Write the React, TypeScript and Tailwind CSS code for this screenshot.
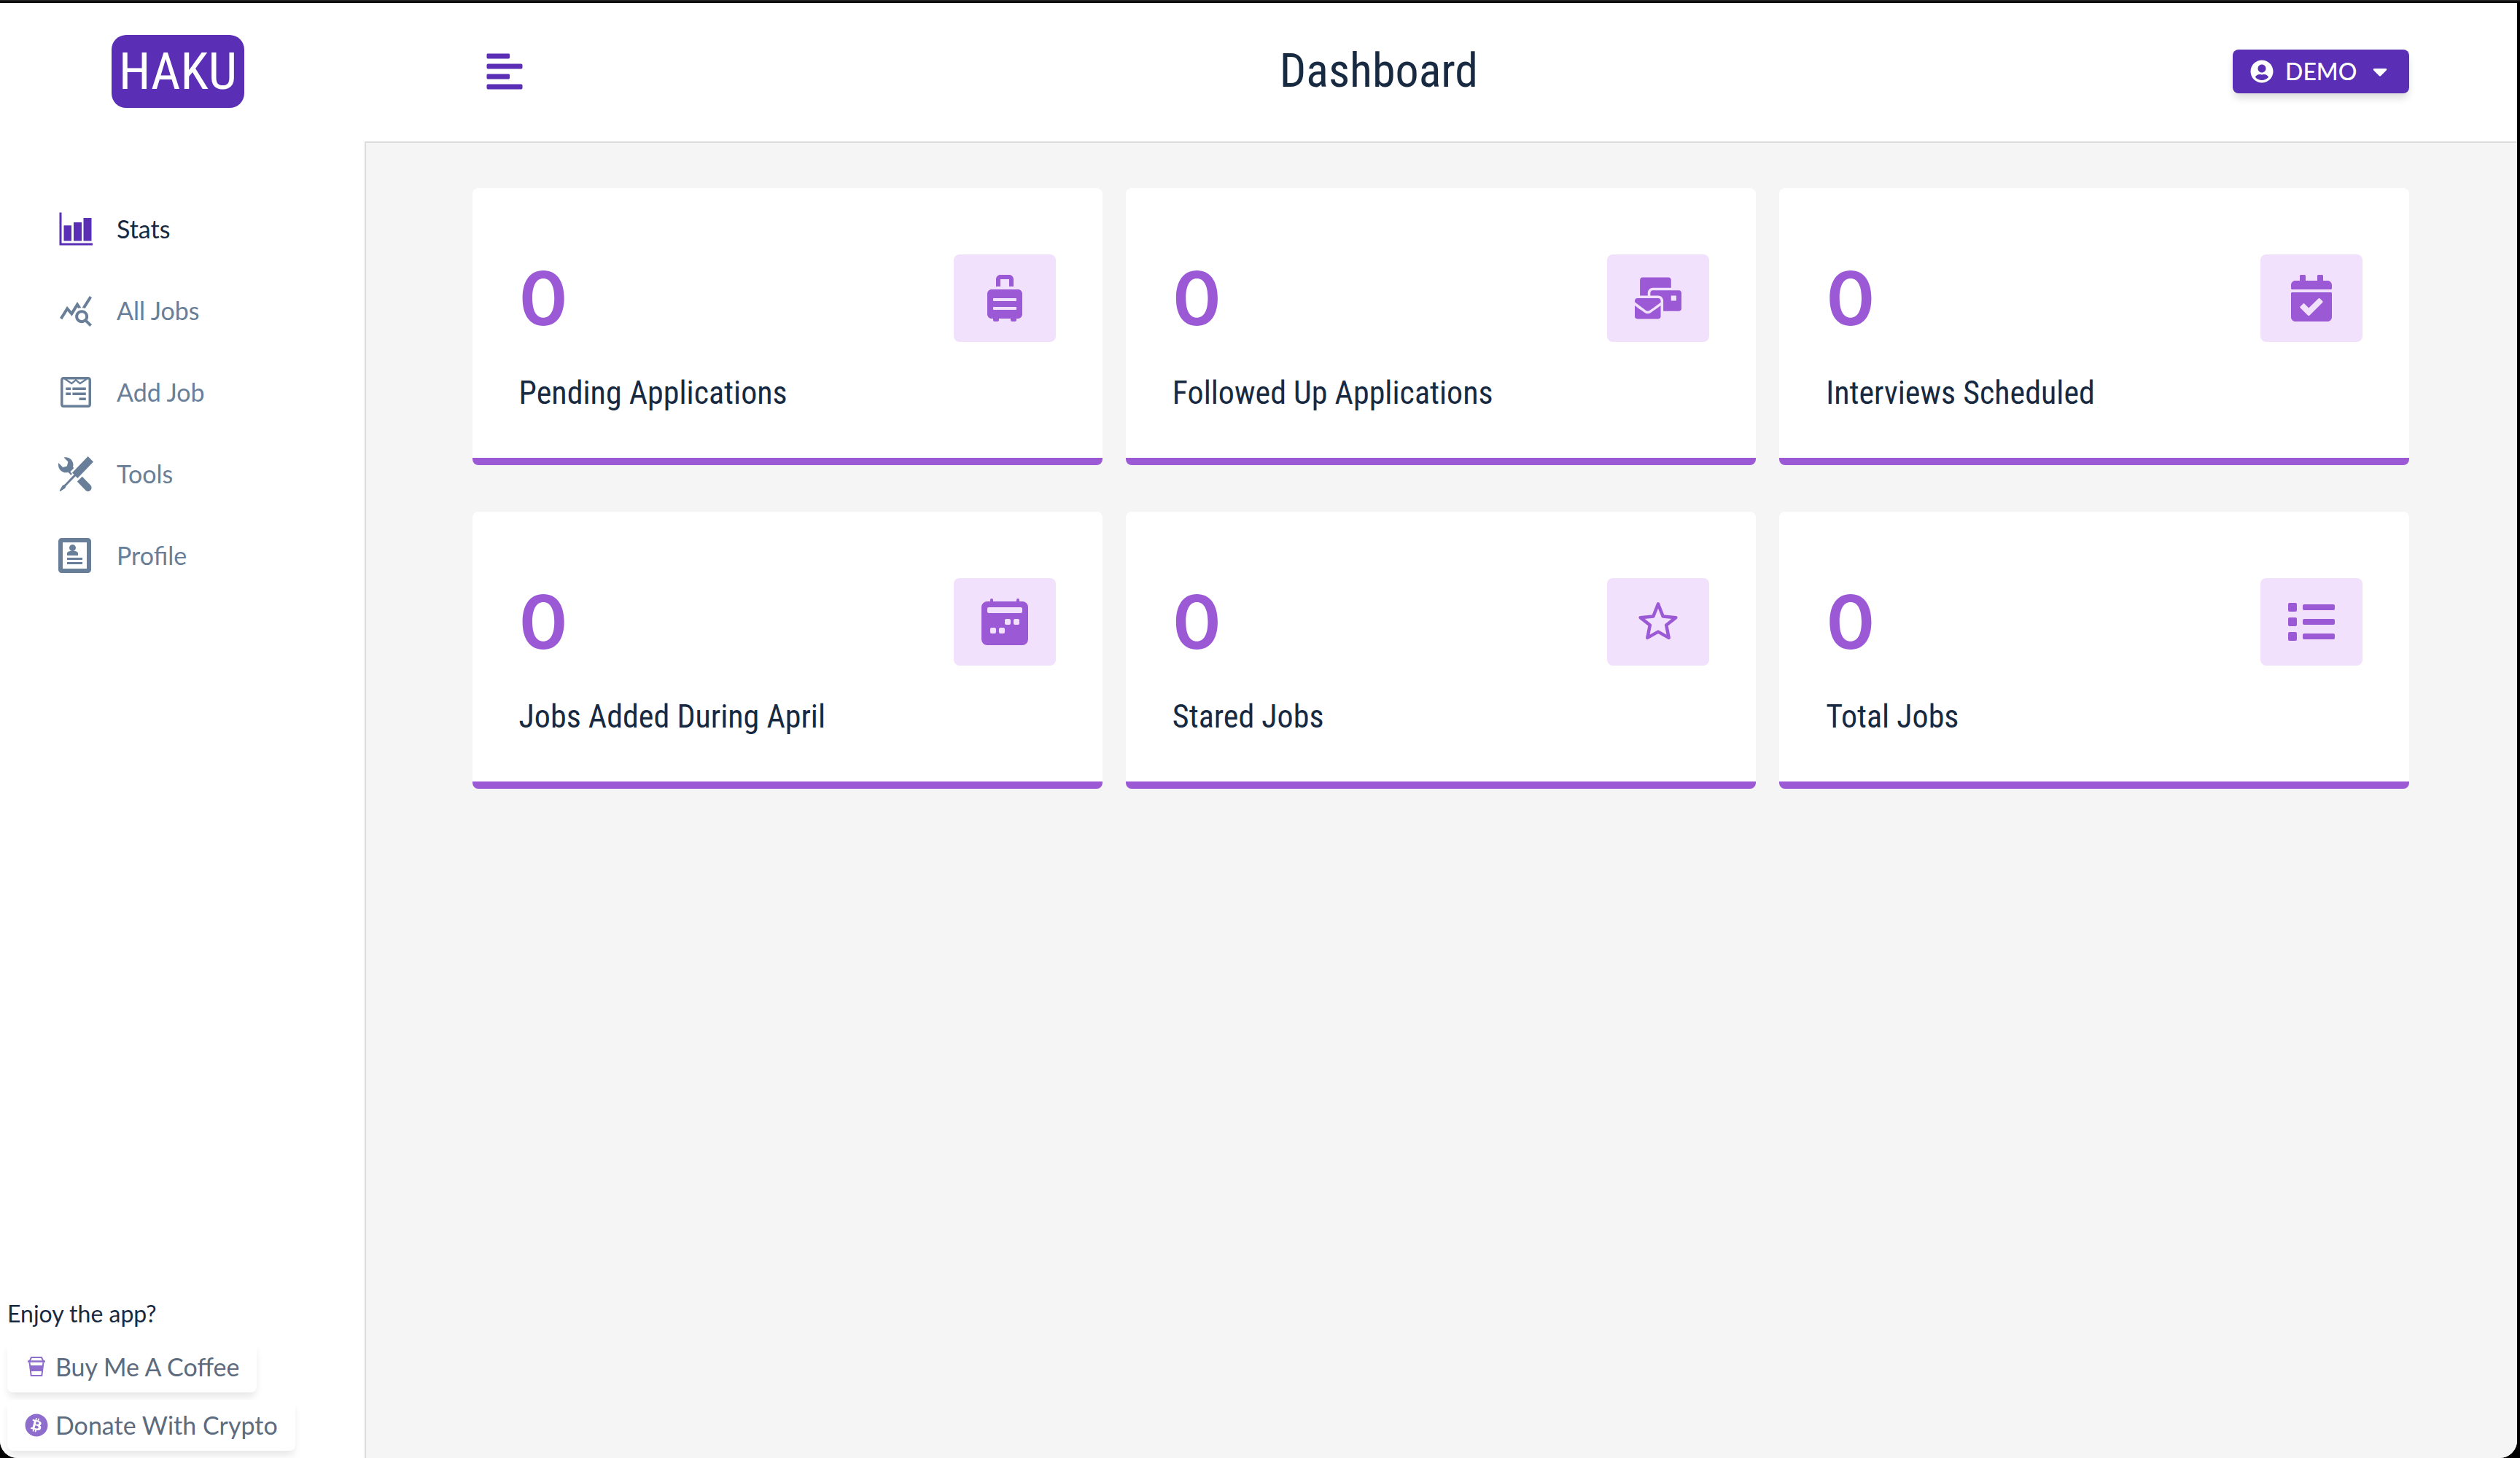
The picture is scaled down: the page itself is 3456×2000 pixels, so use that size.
import type { ReactNode } from "react";
import {
  FaAlignLeft,
  FaBitcoin,
  FaCalendarCheck,
  FaCaretDown,
  FaList,
  FaMailBulk,
  FaSuitcaseRolling,
  FaUserCircle,
  FaWpforms,
} from "react-icons/fa";
import { BsCalendar2WeekFill } from "react-icons/bs";
import { ImProfile } from "react-icons/im";
import { MdQueryStats } from "react-icons/md";

function BarChartIcon() {
  return (
    <svg viewBox="0 0 48 48" className="size-12" fill="currentColor" aria-hidden="true">
      <path d="M1.500 1.500h3v42h42.500v3H1.500z" />
      <path d="M7.500 19.200h10.500v21.300H7.500zM21 15h11v25.500H21zM34.500 9H45.500v31.500h-11z" />
    </svg>
  );
}

function ToolsIcon() {
  return (
    <svg viewBox="0 0 16 16" className="size-12" fill="currentColor" aria-hidden="true">
      <path d="M4.480 7.270c.26.26 1.280 1.330 1.280 1.330l.56-.58-.88-.91 1.690-1.800s-.76-.74-.43-.45c.32-1.190.03-2.510-.87-3.440C4.930.5 3.660.2 2.520.51l1.930 2-.51 1.960-1.890.52-1.930-1.990C-.19 4.170.1 5.480 1 6.400c.94.98 2.290 1.260 3.480.87zm6.440 1.940l-2.330 2.300 3.840 3.980c.31.33.73.49 1.140.49.41 0 .82-.16 1.140-.49.63-.65.63-1.700 0-2.350l-3.790-3.930zM16 2.530L13.550 0 6.330 7.460l.88.91-4.310 4.460-.99.53-1.390 2.270.35.37 2.200-1.440.51-1.020L7.900 9.080l.88.91L16 2.530z" />
    </svg>
  );
}

function StarIcon() {
  return (
    <svg
      viewBox="0 0 24 24"
      className="size-16"
      fill="none"
      stroke="currentColor"
      strokeWidth="1.700"
      strokeLinejoin="round"
      aria-hidden="true"
    >
      <path d="M12 2.800 14.500 9.200 21.100 9.800 16.200 13.700 17.500 20.200 12 17.100 6.500 20.200 7.800 13.700 2.900 9.800 9.500 9.200z" />
    </svg>
  );
}

function CoffeeIcon() {
  return (
    <svg viewBox="0 0 32 32" className="size-8" fill="none" stroke="currentColor" strokeWidth="2" aria-hidden="true">
      <path d="M6.500 8.500 9 3h14l2.500 5.500" />
      <path d="M4 8.500h24" strokeWidth="2.500" />
      <path d="M6.500 9.500 8.700 28h14.600l2.200-18.500" />
      <path d="M7.200 14h17.600l-1 8H8.200z" fill="currentColor" stroke="none" />
    </svg>
  );
}

type NavItem = { label: string; icon: ReactNode; active?: boolean };

const navItems: NavItem[] = [
  { label: "Stats", icon: <BarChartIcon />, active: true },
  { label: "All Jobs", icon: <MdQueryStats className="size-12" /> },
  { label: "Add Job", icon: <FaWpforms className="size-12" /> },
  { label: "Tools", icon: <ToolsIcon /> },
  { label: "Profile", icon: <ImProfile className="size-12" /> },
];

const stats: { label: string; icon: ReactNode }[] = [
  { label: "Pending Applications", icon: <FaSuitcaseRolling /> },
  { label: "Followed Up Applications", icon: <FaMailBulk /> },
  { label: "Interviews Scheduled", icon: <FaCalendarCheck /> },
  { label: "Jobs Added During April", icon: <BsCalendar2WeekFill /> },
  { label: "Stared Jobs", icon: <StarIcon /> },
  { label: "Total Jobs", icon: <FaList /> },
];

function Sidebar() {
  return (
    <aside className="flex w-[500px] shrink-0 flex-col bg-white">
      <div className="flex h-[188px] items-center pl-[153px]">
        <a
          href="#home"
          className="flex h-[100px] w-[182px] items-center justify-center rounded-[20px] bg-[#5a2eb5] font-['Roboto_Condensed','Roboto',sans-serif] text-[70px] leading-none text-white"
        >
          HAKU
        </a>
      </div>
      <nav className="mt-[66px] flex flex-1 flex-col text-[34px]">
        {navItems.map((item) => (
          <a
            key={item.label}
            href="#nav"
            aria-current={item.active ? "page" : undefined}
            className={
              item.active
                ? "flex h-28 items-center gap-8 pl-20 text-[#172a42]"
                : "flex h-28 items-center gap-8 pl-20 text-[#697f99]"
            }
          >
            <span className={item.active ? "text-[#5a2eb5]" : ""}>{item.icon}</span>
            <span>{item.label}</span>
          </a>
        ))}
      </nav>
      <div className="flex flex-col items-start gap-[10px] px-[10px] pb-[10px]">
        <p className="mb-1 text-[#172a42]">Enjoy the app?</p>
        <a
          href="#coffee"
          className="flex h-[70px] items-center gap-[10px] rounded-lg bg-white px-6 text-[34px] text-[#5d6b7e] shadow-[0_8px_12px_-2px_rgba(0,0,0,0.1)]"
        >
          <span className="text-[#8e6dcd]">
            <CoffeeIcon />
          </span>
          Buy Me A Coffee
        </a>
        <a
          href="#crypto"
          className="flex h-[70px] items-center gap-[10px] rounded-lg bg-white px-6 text-[34px] text-[#5d6b7e] shadow-[0_8px_12px_-2px_rgba(0,0,0,0.1)]"
        >
          <FaBitcoin className="size-8 text-[#8e6dcd]" />
          Donate With Crypto
        </a>
      </div>
    </aside>
  );
}

function StatCard({ label, icon }: { label: string; icon: ReactNode }) {
  return (
    <article className="flex h-[380px] flex-col rounded-lg border-b-[10px] border-[#9b59d6] bg-white px-16 pt-[91px]">
      <header className="flex h-[120px] items-center justify-between">
        <span className="font-['Inter',sans-serif] text-[102px] leading-none font-semibold text-[#9b59d6]">0</span>
        <span className="flex h-[120px] w-[140px] items-center justify-center rounded-lg bg-[#f1e1fc] text-[64px] text-[#9b59d6]">
          {icon}
        </span>
      </header>
      <h2 className="mt-[46px] font-['Roboto_Condensed','Roboto',sans-serif] text-[44px] leading-[48px] text-[#172a42]">
        {label}
      </h2>
    </article>
  );
}

export default function App() {
  return (
    <div className="flex min-h-screen flex-col bg-black font-['Lato',sans-serif] text-[32px] leading-[48px]">
      <div className="h-1 border-t-2 border-[#222222] bg-black" />
      <div className="mr-1 flex flex-1 overflow-hidden rounded-b-[24px] bg-white">
        <Sidebar />
        <div className="flex min-w-0 flex-1 flex-col">
          <header className="h-48 border-b-2 border-[#dcdcdc] bg-white pb-0.5">
            <div className="mx-auto flex h-full w-[90%] items-center justify-between pl-4">
              <button type="button" aria-label="Toggle sidebar" className="text-[56px] text-[#5a2eb5]">
                <FaAlignLeft />
              </button>
              <h1 className="font-['Roboto_Condensed','Roboto',sans-serif] text-[64px] leading-[72px] text-[#172a42]">
                Dashboard
              </h1>
              <button
                type="button"
                className="flex h-[60px] items-center gap-4 rounded-lg bg-[#5a2eb5] px-6 font-medium text-white shadow-[0_8px_12px_-2px_rgba(0,0,0,0.15)]"
              >
                <FaUserCircle />
                DEMO
                <FaCaretDown />
              </button>
            </div>
          </header>
          <main className="flex-1 bg-[#f5f5f5] pt-[62px] shadow-[inset_2px_0_0_#dcdcdc]">
            <section className="mx-auto grid w-[90%] grid-cols-3 gap-x-8 gap-y-16">
              {stats.map((stat) => (
                <StatCard key={stat.label} label={stat.label} icon={stat.icon} />
              ))}
            </section>
          </main>
        </div>
      </div>
    </div>
  );
}
